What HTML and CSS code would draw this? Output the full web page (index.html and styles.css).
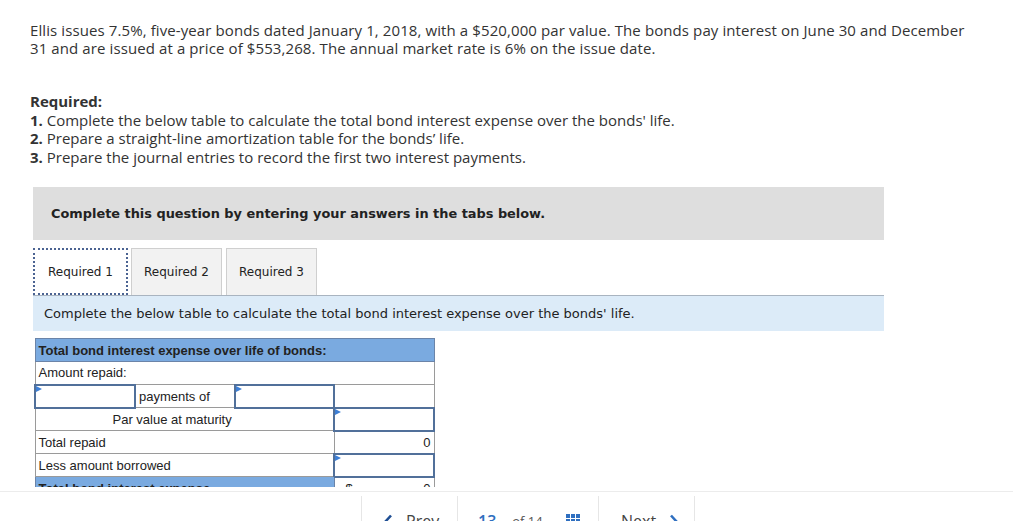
FILE: index.html
```html
<!DOCTYPE html>
<html>
<head>
<meta charset="utf-8">
<link rel="stylesheet" href="styles.css">
</head>
<body>
<div class="page">
  <p class="intro">Ellis issues 7.5%, five-year bonds dated January 1, 2018, with a $520,000 par value. The bonds pay interest on June 30 and December 31 and are issued at a price of $553,268. The annual market rate is 6% on the issue date.</p>
  <div class="required">
    <div class="req-title">Required:</div>
    <div><b>1.</b> Complete the below table to calculate the total bond interest expense over the bonds' life.</div>
    <div><b>2.</b> Prepare a straight-line amortization table for the bonds’ life.</div>
    <div><b>3.</b> Prepare the journal entries to record the first two interest payments.</div>
  </div>
  <div class="notice">Complete this question by entering your answers in the tabs below.</div>
  <div class="tabs">
    <div class="tab active">Required 1</div>
    <div class="tab">Required 2</div>
    <div class="tab">Required 3</div>
  </div>
  <div class="instr">Complete the below table to calculate the total bond interest expense over the bonds' life.</div>
  <table class="grid">
    <colgroup><col class="c1"><col class="c2"><col class="c3"><col class="c4"></colgroup>
    <tr><td colspan="4" class="head">Total bond interest expense over life of bonds:</td></tr>
    <tr><td colspan="4">Amount repaid:</td></tr>
    <tr><td class="inp"></td><td>payments of</td><td class="inp"></td><td></td></tr>
    <tr><td colspan="3" class="par">Par value at maturity</td><td class="inp"></td></tr>
    <tr><td colspan="3">Total repaid</td><td class="num total">0</td></tr>
    <tr><td colspan="3">Less amount borrowed</td><td class="inp"></td></tr>
    <tr><td colspan="3" class="head">Total bond interest expense</td><td class="num total"><span class="dollar">$</span>0</td></tr>
  </table>
</div>
<div class="footer">
  <div class="footer-inner">
    <div class="navbtn prev">
      <svg class="chev" width="9" height="14" viewBox="0 0 9 14"><path d="M7 1.5 L2 7 L7 12.5" fill="none" stroke="#1f4f94" stroke-width="2.6"/></svg>
      <span>Prev</span>
    </div>
    <div class="navbtn pages"><span class="cur">13</span><span class="of">of 14</span>
      <svg class="gridicon" width="14" height="14" viewBox="0 0 14 14"><g fill="#2f6fc0"><rect x="0" y="0" width="4" height="4"/><rect x="5" y="0" width="4" height="4"/><rect x="10" y="0" width="4" height="4"/><rect x="0" y="5" width="4" height="4"/><rect x="5" y="5" width="4" height="4"/><rect x="10" y="5" width="4" height="4"/><rect x="0" y="10" width="4" height="4"/><rect x="5" y="10" width="4" height="4"/><rect x="10" y="10" width="4" height="4"/></g></svg>
    </div>
    <div class="navbtn next">
      <span>Next</span>
      <svg class="chev" width="9" height="14" viewBox="0 0 9 14"><path d="M2 1.5 L7 7 L2 12.5" fill="none" stroke="#2f6fc0" stroke-width="2.6"/></svg>
    </div>
  </div>
</div>
</body>
</html>
```
FILE: styles.css
```css
html, body { margin: 0; padding: 0; background: #fff; }
body { font-family: "Open Sans", "Liberation Sans", sans-serif; color: #333; }
.page { padding: 21px 0 40px 0; }
.intro { margin: 0 30px; width: 945px; font-size: 15px; line-height: 18px; letter-spacing: 0.1px; }
.required { margin: 35px 30px 0 30px; font-size: 15px; line-height: 18.5px; }
.req-title { font-weight: bold; }
.notice {
  margin: 21px 0 0 33px; width: 833px; height: 53px; padding-left: 18px;
  background: #dedede; display: flex; align-items: center;
  font-family: "DejaVu Sans", Verdana, sans-serif; font-weight: bold; font-size: 12.9px; color: #222;
}
.tabs { display: flex; gap: 3px; margin: 8px 0 0 33px; height: 47px; }
.tab {
  width: 91px; box-sizing: border-box; border: 1px solid #cfcfcf; border-bottom: none;
  background: #f2f2f2; display: flex; align-items: center; justify-content: center;
  font-family: "DejaVu Sans", Verdana, sans-serif; font-size: 12px; color: #222;
}
.tab:nth-child(3) { margin-left: 1px; }
.tab.active { width: 95px; background: #fff; border: 2px dotted #4b6392; }
.instr {
  margin-left: 33px; width: 840px; height: 35px; padding-left: 11px;
  background: #dcebf8; border-top: 1px solid #a9b4c0; display: flex; align-items: center;
  font-family: "DejaVu Sans", Verdana, sans-serif; font-size: 13px; color: #222;
}
.grid {
  margin: 7px 0 0 34px; border-collapse: collapse; table-layout: fixed; width: 399px;
  font-family: "Liberation Sans", Arial, sans-serif; font-size: 13px; color: #222;
  border: 1px solid #6b84a8;
}
.grid col.c1 { width: 100px; } .grid col.c2 { width: 100px; } .grid col.c3 { width: 99px; } .grid col.c4 { width: 100px; }
.grid td { height: 23px; padding: 0 3px; border: 1px solid #9a9a9a; position: relative; box-sizing: border-box; }
.grid td.head { background: #7aaae0; font-weight: bold; font-size: 13px; border-color: #6b84a8; }
.grid td.inp { border: 2px solid #51709a; }
.grid td.inp::before {
  content: ""; position: absolute; left: 0; top: 0;
  border-left: 6px solid #3d7fd6; border-top: 3px solid transparent; border-bottom: 3px solid transparent;
}
.grid td.par { padding-left: 77px; }
.grid td.num { text-align: right; }
.grid td.total { border-top: 2px solid #111; }
.dollar { float: left; padding-left: 8px; }
.footer {
  position: fixed; left: 0; right: 0; top: 487px; height: 70px; background: #fff; padding-top: 4px;
  font-family: "Open Sans", "Liberation Sans", sans-serif; font-size: 16px; color: #444;
}
.footer-inner { border-top: 1px solid #ececec; display: flex; padding-left: 361px; padding-top: 4px; }
.navbtn {
  height: 50px; box-sizing: border-box; border-left: 1px solid #e6e6e6; border-right: 1px solid #e6e6e6;
  display: flex; align-items: center; margin-right: -1px;
}
.prev { width: 97px; padding-left: 22px; gap: 13px; }
.pages { width: 142px; padding-left: 20px; }
.next { width: 97px; padding-left: 22px; gap: 13px; }
.chev { display: block; }
.cur { color: #2f6fc0; font-weight: 600; margin-right: 16px; }
.of { color: #555; font-size: 13px; margin-right: 23px; }
.gridicon { display: block; }
```
